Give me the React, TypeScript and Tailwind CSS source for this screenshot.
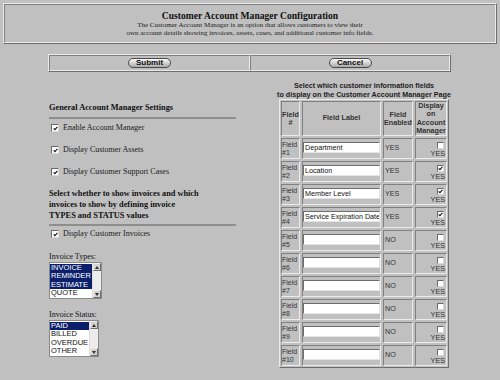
import { FC } from 'react';

const inset = 'border border-t-[#808080] border-l-[#808080] border-r-[#ebebeb] border-b-[#ebebeb]';
const outset = 'border border-t-[#ebebeb] border-l-[#ebebeb] border-r-[#6e6e6e] border-b-[#6e6e6e]';
const sans = "font-['Liberation_Sans',Arial,sans-serif]";

const fields = [
  { label: 'Department', enabled: true, shown: false },
  { label: 'Location', enabled: true, shown: true },
  { label: 'Member Level', enabled: true, shown: true },
  { label: 'Service Expiration Date', enabled: true, shown: true },
  { label: '', enabled: false, shown: false },
  { label: '', enabled: false, shown: false },
  { label: '', enabled: false, shown: false },
  { label: '', enabled: false, shown: false },
  { label: '', enabled: false, shown: false },
  { label: '', enabled: false, shown: false },
];

const CheckBox: FC<{ checked?: boolean; big?: boolean }> = ({ checked, big }) => (
  <span
    className={`flex items-center justify-center bg-white border border-t-[#6a6a6a] border-l-[#6a6a6a] border-r-[#dadada] border-b-[#dadada] ${big ? 'w-[8px] h-[8px]' : 'w-[7px] h-[7px]'}`}
  >
    {checked && (
      <svg viewBox="0 0 6 6" className="w-[5px] h-[5px]" aria-hidden="true">
        <path d="M0.8 2.8 L2.3 4.4 L5.3 1" stroke="#111" strokeWidth="1.3" fill="none" />
      </svg>
    )}
  </span>
);

const CheckRow: FC<{ label: string; className: string }> = ({ label, className }) => (
  <div className={`flex items-center h-[12px] ${className}`}>
    <span className="ml-[2px]">
      <CheckBox checked big />
    </span>
    <span className="ml-[4px] text-[8px] leading-[10px] text-[#1a1a1a]">{label}</span>
  </div>
);

const Arrow: FC<{ down?: boolean }> = ({ down }) => (
  <span className={`flex items-center justify-center w-[8px] h-[8px] bg-[#d6d3cc] ${outset}`}>
    <svg viewBox="0 0 4 3" className="w-[4px] h-[3px]" aria-hidden="true">
      <path d={down ? 'M0 0 L4 0 L2 3 Z' : 'M0 3 L4 3 L2 0 Z'} fill="#333" />
    </svg>
  </span>
);

const ListBox: FC<{ items: { label: string; selected?: boolean }[]; className: string }> = ({ items, className }) => (
  <div className={`flex h-[37px] bg-white border border-[#8a8a8a] ${sans} ${className}`}>
    <div className="flex-1 flex flex-col pt-[0.5px]">
      {items.map((item) => (
        <div
          key={item.label}
          className={`h-[8.5px] leading-[8.5px] text-[7.5px] pl-[1px] ${item.selected ? 'bg-[#0c1f6b] text-white' : 'text-[#111]'}`}
        >
          {item.label}
        </div>
      ))}
    </div>
    <div className="w-[9px] flex flex-col justify-between bg-[#ececec] border-l border-[#dcdcdc]">
      <Arrow />
      <Arrow down />
    </div>
  </div>
);

const Button: FC<{ label: string }> = ({ label }) => (
  <span
    className={`flex items-center justify-center w-[43px] h-[10px] rounded-full border border-[#4a4a4a] bg-linear-to-b from-[#fbfbfb] to-[#a9a9a9] text-[8px] leading-none font-bold text-[#111] ${sans}`}
  >
    {label}
  </span>
);

const FieldTable: FC = () => (
  <div className={`grid grid-cols-[19px_79px_30px_32px] gap-[2px] p-[1px] ${outset} ${sans} text-[#333]`}>
    <div className={`h-[35px] flex items-center justify-center text-center text-[7.2px] leading-[7.5px] font-bold ${inset}`}>
      Field<br />#
    </div>
    <div className={`h-[35px] flex items-center justify-center text-[7.2px] font-bold ${inset}`}>Field Label</div>
    <div className={`h-[35px] flex items-center justify-center text-center text-[7.2px] leading-[8px] font-bold ${inset}`}>
      Field<br />Enabled
    </div>
    <div className={`h-[35px] flex items-center justify-center text-center text-[7.2px] leading-[8.3px] font-bold ${inset}`}>
      Display<br />on<br />Account<br />Manager
    </div>

    {fields.map((field, i) => (
      <div key={i} className="contents">
        <div className={`h-[21px] flex flex-col justify-center text-[7px] leading-[7.5px] ${inset}`}>
          <span>Field</span>
          <span>#{i + 1}</span>
        </div>
        <div className={`h-[21px] pt-[2.5px] ${inset}`}>
          <div className="h-[11px] w-full bg-white border border-t-[#6d6d6d] border-l-[#6d6d6d] border-r-[#e4e4e4] border-b-[#e4e4e4] px-[1px] text-[7.2px] leading-[9px] text-[#111] whitespace-nowrap overflow-hidden">
            {field.label}
          </div>
        </div>
        <div className={`h-[21px] flex items-center pl-[1px] text-[7.2px] ${inset}`}>
          {field.enabled ? 'YES' : 'NO'}
        </div>
        <div className={`h-[21px] flex flex-col items-end pr-[1px] pt-[3px] ${inset}`}>
          <span className="mr-[1px]">
            <CheckBox checked={field.shown} />
          </span>
          <span className="mt-[1px] text-[7.2px] leading-[8px]">YES</span>
        </div>
      </div>
    ))}
  </div>
);

export default function App() {
  return (
    <div className="w-[500px] h-[380px] overflow-hidden bg-[#c0c0c0] pt-[3px] px-[3px] font-['Liberation_Serif',serif] text-[#111]">
      <div className={`h-[41px] ${outset}`}>
        <div className={`h-full pt-[4.5px] text-center ${inset}`}>
          <h1 className="text-[9.6px] leading-[11px] font-bold">Customer Account Manager Configuration</h1>
          <p className="text-[7px] leading-[8.3px] text-[#222]">
            The Customer Account Manager is an option that allows customers to view their
            <br />
            own account details showing invoices, assets, cases, and additional customer info fields.
          </p>
        </div>
      </div>

      <div className={`mt-[10px] ml-[45px] w-[403px] h-[18px] flex ${outset}`}>
        <div className={`w-[201px] flex items-center justify-center ${inset}`}>
          <Button label="Submit" />
        </div>
        <div className={`flex-1 flex items-center justify-center ${inset}`}>
          <Button label="Cancel" />
        </div>
      </div>

      <div className="flex pl-[46px]">
        <div className="w-[230px] shrink-0">
          <h2 className="mt-[31px] text-[8.3px] leading-[10px] font-bold">General Account Manager Settings</h2>
          <div className="mt-[4px] h-[2px] w-[187px] bg-[#8e8e8e]" />
          <CheckRow className="mt-[3px]" label="Enable Account Manager" />
          <CheckRow className="mt-[10px]" label="Display Customer Assets" />
          <CheckRow className="mt-[10px]" label="Display Customer Support Cases" />
          <p className="mt-[9.5px] text-[8.3px] leading-[11px] font-bold">
            Select whether to show invoices and which
            <br />
            invoices to show by defining invoice
            <br />
            TYPES and STATUS values
          </p>
          <div className="mt-[3.5px] h-[2px] w-[187px] bg-[#8e8e8e]" />
          <CheckRow className="mt-[2px]" label="Display Customer Invoices" />
          <div className="mt-[11.5px] text-[8px] leading-[10px]">Invoice Types:</div>
          <ListBox
            className="mt-[0.5px] w-[53px]"
            items={[
              { label: 'INVOICE', selected: true },
              { label: 'REMINDER', selected: true },
              { label: 'ESTIMATE', selected: true },
              { label: 'QUOTE' },
            ]}
          />
          <div className="mt-[11px] text-[8px] leading-[10px]">Invoice Status:</div>
          <ListBox
            className="w-[50px]"
            items={[
              { label: 'PAID', selected: true },
              { label: 'BILLED' },
              { label: 'OVERDUE' },
              { label: 'OTHER' },
            ]}
          />
        </div>

        <div className="w-[170px] shrink-0">
          <p className={`mt-[10px] -mx-[10px] whitespace-nowrap text-center text-[7.2px] leading-[8.5px] font-bold text-[#222] ${sans}`}>
            Select which customer information fields
            <br />
            to display on the Customer Account Manager Page
          </p>
          <FieldTable />
        </div>
      </div>
    </div>
  );
}
